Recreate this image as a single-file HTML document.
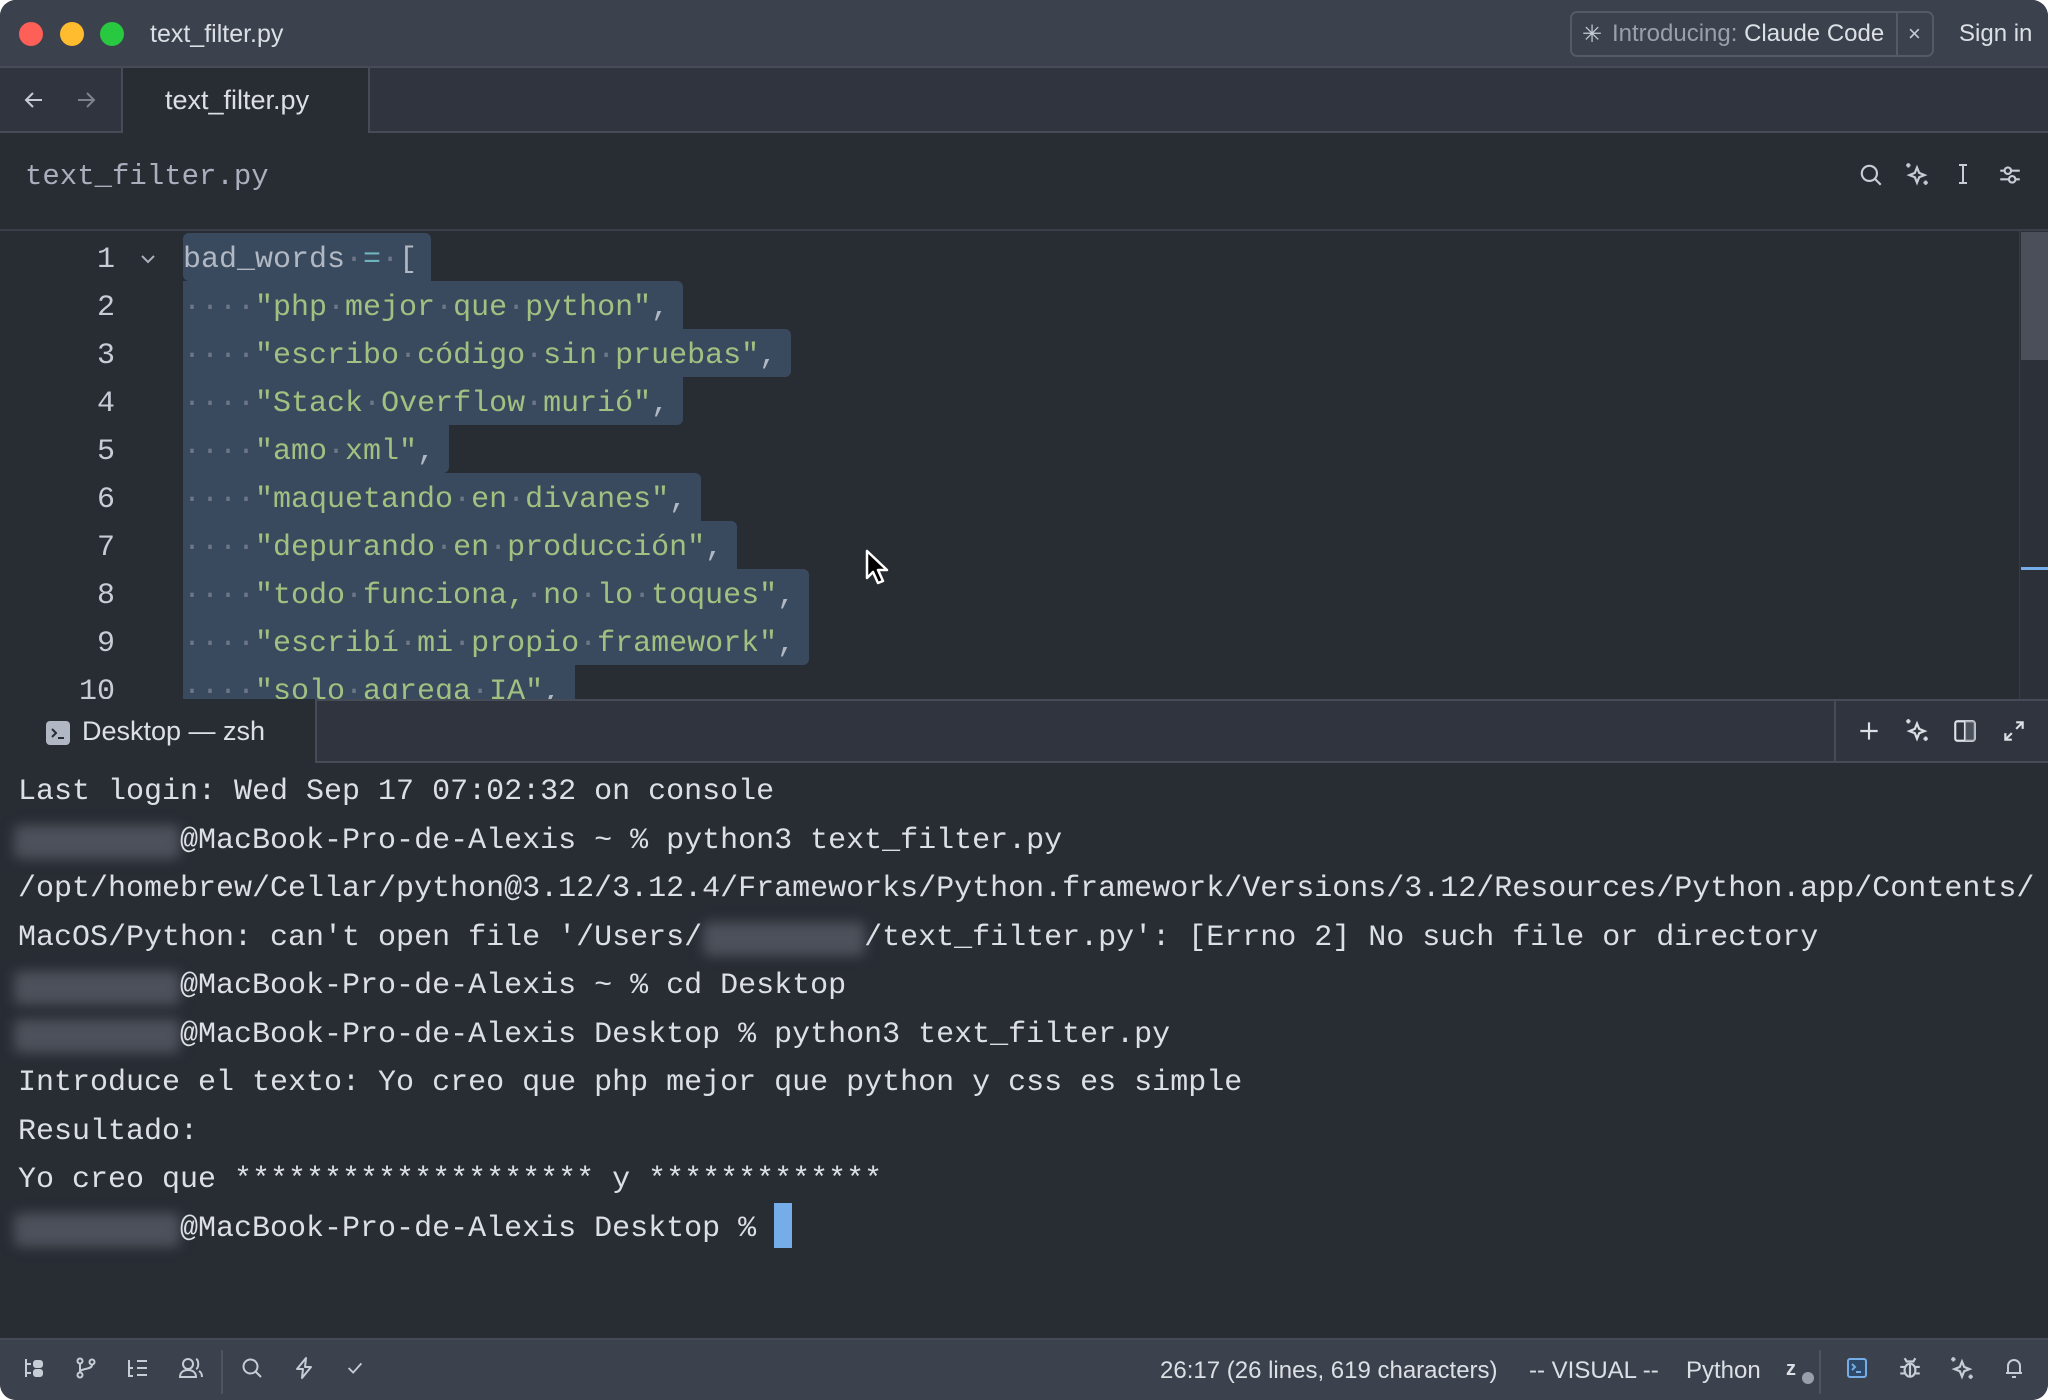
<!DOCTYPE html>
<html><head><meta charset="utf-8">
<style>
*{margin:0;padding:0;box-sizing:border-box}
html,body{width:2048px;height:1400px;background:#fff;overflow:hidden}
#win{position:absolute;left:0;top:0;width:2048px;height:1400px;border-radius:16px;overflow:hidden;background:#282c33;font-family:"Liberation Sans",sans-serif}
.abs{position:absolute}
.mono{font-family:"Liberation Mono",monospace;font-size:30px;white-space:pre}
#title{left:0;top:0;width:2048px;height:68px;background:#3b414d;border-bottom:2px solid #464b57}
.dot{position:absolute;width:24px;height:24px;border-radius:50%;top:22px}
#tabs{left:0;top:68px;width:2048px;height:65px;background:#2f343e;border-bottom:2px solid #464b57}
#hdr{left:0;top:133px;width:2048px;height:98px;background:#282c33;border-bottom:2px solid #3a3f4a}
.ln{position:absolute;width:115px;text-align:right;color:#c8ccd4}
.code{position:absolute;left:183px}
.sel{position:absolute;left:183px;background:#394a5e;height:48px}
.ws{color:#6e7686}
.s{color:#a1c181}
.t{color:#b2b8c3}
#tt{left:0;top:699px;width:2048px;height:64px;background:#2f343e;border-top:2px solid #464b57;border-bottom:2px solid #464b57}
.term{position:absolute;left:18px;color:#dce0e5}
.blur{position:absolute;left:14px;width:166px;height:34px;background:#4c515b;filter:blur(6px);border-radius:6px}
#status{left:0;top:1338px;width:2048px;height:62px;background:#3b414d;border-top:2px solid #464b57}
.ic{position:absolute}
</style></head><body>
<div id="win">
<div id="title" class="abs">
 <div class="dot" style="left:19px;background:#fe5f57"></div>
 <div class="dot" style="left:60px;background:#febc2e"></div>
 <div class="dot" style="left:100px;background:#28c840"></div>
 <div class="abs" style="left:150px;top:20px;font-size:25px;color:#dce0e5">text_filter.py</div>
 <div class="abs" style="left:1570px;top:11px;width:364px;height:46px;border:2px solid #545a66;border-radius:7px"></div>
 <div class="abs" style="left:1896px;top:12px;width:2px;height:44px;background:#545a66"></div>
 <div class="abs" style="left:1582px;top:20px;font-size:24px;color:#c8ccd4">✳</div>
 <div class="abs" style="left:1612px;top:20px;font-size:24px;color:#9aa0ab">Introducing: <span style="color:#dce0e5">Claude Code</span></div>
 <div class="abs" style="left:1908px;top:21px;font-size:22px;color:#c8ccd4">×</div>
 <div class="abs" style="left:1959px;top:20px;font-size:24px;color:#dce0e5">Sign in</div>
</div>
<div id="tabs" class="abs">
 <svg class="ic" style="left:22px;top:20px" width="24" height="24" viewBox="0 0 24 24" fill="none" stroke="#c8ccd4" stroke-width="2"><path d="M20 12H4M11 5l-7 7 7 7"/></svg>
 <svg class="ic" style="left:74px;top:20px" width="24" height="24" viewBox="0 0 24 24" fill="none" stroke="#7d828c" stroke-width="2"><path d="M4 12h16M13 5l7 7-7 7"/></svg>
 <div class="abs" style="left:121px;top:0;width:249px;height:67px;background:#282c33;border-left:2px solid #464b57;border-right:2px solid #464b57"></div>
 <div class="abs" style="left:165px;top:17px;font-size:27px;color:#dce0e5">text_filter.py</div>
</div>
<div id="hdr" class="abs">
 <div class="abs mono" style="left:25px;top:27px;color:#a9afbc;font-size:29px">text_filter.py</div>
 <svg class="ic" style="left:1858px;top:29px" width="26" height="26" viewBox="0 0 24 24" fill="none" stroke="#c8ccd4" stroke-width="2"><circle cx="10.5" cy="10.5" r="7"/><path d="M15.5 15.5L21 21"/></svg>
 <svg class="ic" style="left:1904px;top:28px" width="26" height="26" viewBox="0 0 24 24" fill="none" stroke="#c8ccd4" stroke-width="2"><path d="M12 6l2 5 5 2-5 2-2 5-2-5-5-2 5-2z"/><path d="M4 2v4M2 4h4M20 18v4M18 20h4"/></svg>
 <svg class="ic" style="left:1951px;top:29px" width="24" height="24" viewBox="0 0 24 24" fill="none" stroke="#c8ccd4" stroke-width="2"><path d="M8 3h8M8 21h8M12 3v18"/></svg>
 <svg class="ic" style="left:1997px;top:29px" width="26" height="26" viewBox="0 0 24 24" fill="none" stroke="#c8ccd4" stroke-width="2"><path d="M3 8h4M13 8h8M3 16h8M17 16h4"/><circle cx="10" cy="8" r="3"/><circle cx="14" cy="16" r="3"/></svg>
</div>
<!-- editor -->
<div class="abs" style="left:2019px;top:231px;width:29px;height:468px;background:#2c3038;border-left:1px solid #363b45"></div>
<div class="abs" style="left:2021px;top:232px;width:27px;height:128px;background:#4a4f59"></div>
<div class="abs" style="left:2021px;top:567px;width:27px;height:3px;background:#74ade8"></div>
<div class="sel" style="top:233px;width:248px;border-radius:6px 6px 0 6px"></div>
<div class="sel" style="top:281px;width:500px;border-radius:0 6px 0 0"></div>
<div class="sel" style="top:329px;width:608px;border-radius:0 6px 6px 0"></div>
<div class="sel" style="top:377px;width:500px;border-radius:0 0 6px 0"></div>
<div class="sel" style="top:425px;width:266px;border-radius:0 0 6px 0"></div>
<div class="sel" style="top:473px;width:518px;border-radius:0 6px 0 0"></div>
<div class="sel" style="top:521px;width:554px;border-radius:0 6px 0 0"></div>
<div class="sel" style="top:569px;width:626px;border-radius:0 6px 0 0"></div>
<div class="sel" style="top:617px;width:626px;border-radius:0 0 6px 0"></div>
<div class="sel" style="top:665px;width:392px;height:34px"></div>
<div class="abs" style="left:0;top:231px;width:2019px;height:468px;overflow:hidden">
<div class="mono" style="position:absolute;left:0;top:3px;line-height:48px">
<div class="ln" style="top:2px">1</div><div class="ln" style="top:50px">2</div><div class="ln" style="top:98px">3</div><div class="ln" style="top:146px">4</div><div class="ln" style="top:194px">5</div><div class="ln" style="top:242px">6</div><div class="ln" style="top:290px">7</div><div class="ln" style="top:338px">8</div><div class="ln" style="top:386px">9</div><div class="ln" style="top:434px">10</div>
<div class="code" style="top:2px"><span class="t">bad_words</span><span class="ws">·</span><span style="color:#6eb4bf">=</span><span class="ws">·</span><span class="t">[</span></div>
<div class="code" style="top:50px"><span class="ws">····</span><span class="s">"php<span class="ws">·</span>mejor<span class="ws">·</span>que<span class="ws">·</span>python"</span><span class="t">,</span></div>
<div class="code" style="top:98px"><span class="ws">····</span><span class="s">"escribo<span class="ws">·</span>código<span class="ws">·</span>sin<span class="ws">·</span>pruebas"</span><span class="t">,</span></div>
<div class="code" style="top:146px"><span class="ws">····</span><span class="s">"Stack<span class="ws">·</span>Overflow<span class="ws">·</span>murió"</span><span class="t">,</span></div>
<div class="code" style="top:194px"><span class="ws">····</span><span class="s">"amo<span class="ws">·</span>xml"</span><span class="t">,</span></div>
<div class="code" style="top:242px"><span class="ws">····</span><span class="s">"maquetando<span class="ws">·</span>en<span class="ws">·</span>divanes"</span><span class="t">,</span></div>
<div class="code" style="top:290px"><span class="ws">····</span><span class="s">"depurando<span class="ws">·</span>en<span class="ws">·</span>producción"</span><span class="t">,</span></div>
<div class="code" style="top:338px"><span class="ws">····</span><span class="s">"todo<span class="ws">·</span>funciona,<span class="ws">·</span>no<span class="ws">·</span>lo<span class="ws">·</span>toques"</span><span class="t">,</span></div>
<div class="code" style="top:386px"><span class="ws">····</span><span class="s">"escribí<span class="ws">·</span>mi<span class="ws">·</span>propio<span class="ws">·</span>framework"</span><span class="t">,</span></div>
<div class="code" style="top:434px"><span class="ws">····</span><span class="s">"solo<span class="ws">·</span>agrega<span class="ws">·</span>IA"</span><span class="t">,</span></div>
</div>
<svg class="ic" style="left:138px;top:18px" width="20" height="20" viewBox="0 0 20 20" fill="none" stroke="#a9afbc" stroke-width="2"><path d="M4 7l6 6 6-6"/></svg>
</div>
<svg class="ic" style="left:864px;top:549px" width="28" height="38" viewBox="0 0 28 38"><path d="M3 2v27l6-6 5 11 5-2-5-11h9z" fill="#000" stroke="#fff" stroke-width="2.5" stroke-linejoin="round"/></svg>
<!-- terminal tab bar -->
<div id="tt" class="abs">
 <div class="abs" style="left:0;top:-2px;width:317px;height:64px;background:#282c33;border-right:2px solid #464b57"></div>
 <div class="abs" style="left:46px;top:20px;width:24px;height:24px;background:#b2b8c3;border-radius:4px"></div>
 <svg class="ic" style="left:46px;top:20px" width="24" height="24" viewBox="0 0 24 24" fill="none" stroke="#282c33" stroke-width="2"><path d="M6 8l4 4-4 4M12 17h6"/></svg>
 <div class="abs" style="left:82px;top:15px;font-size:27px;color:#dce0e5">Desktop — zsh</div>
 <div class="abs" style="left:1834px;top:0;width:2px;height:62px;background:#464b57"></div>
 <svg class="ic" style="left:1856px;top:17px" width="26" height="26" viewBox="0 0 24 24" fill="none" stroke="#dce0e5" stroke-width="2"><path d="M12 4v16M4 12h16"/></svg>
 <svg class="ic" style="left:1904px;top:16px" width="26" height="26" viewBox="0 0 24 24" fill="none" stroke="#dce0e5" stroke-width="2"><path d="M12 6l2 5 5 2-5 2-2 5-2-5-5-2 5-2z"/><path d="M4 2v4M2 4h4M20 18v4M18 20h4"/></svg>
 <svg class="ic" style="left:1952px;top:17px" width="26" height="26" viewBox="0 0 24 24" fill="none" stroke="#dce0e5" stroke-width="2"><rect x="3" y="3" width="18" height="18" rx="2"/><path d="M12 3v18"/><rect x="12" y="3" width="9" height="18" fill="#6a6f78" stroke="none" opacity=".5"/></svg>
 <svg class="ic" style="left:2001px;top:17px" width="26" height="26" viewBox="0 0 24 24" fill="none" stroke="#dce0e5" stroke-width="2"><path d="M14 4h6v6M20 4l-6 6M10 20H4v-6M4 20l6-6"/></svg>
</div>
<!-- terminal -->
<div class="mono" style="position:absolute;left:0;top:768px;line-height:48.5px;color:#dce0e5">
<div class="blur" style="top:57px"></div><div class="blur" style="left:703px;width:162px;top:154px"></div><div class="blur" style="top:203px"></div><div class="blur" style="top:251px"></div><div class="blur" style="top:445px"></div>
<div class="term" style="top:0">Last login: Wed Sep 17 07:02:32 on console</div>
<div class="term" style="top:48.5px">         @MacBook-Pro-de-Alexis ~ % python3 text_filter.py</div>
<div class="term" style="top:97px">/opt/homebrew/Cellar/python@3.12/3.12.4/Frameworks/Python.framework/Versions/3.12/Resources/Python.app/Contents/</div>
<div class="term" style="top:145.5px">MacOS/Python: can't open file '/Users/         /text_filter.py': [Errno 2] No such file or directory</div>
<div class="term" style="top:194px">         @MacBook-Pro-de-Alexis ~ % cd Desktop</div>
<div class="term" style="top:242.5px">         @MacBook-Pro-de-Alexis Desktop % python3 text_filter.py</div>
<div class="term" style="top:291px">Introduce el texto: Yo creo que php mejor que python y css es simple</div>
<div class="term" style="top:339.5px">Resultado:</div>
<div class="term" style="top:388px">Yo creo que ******************** y *************</div>
<div class="term" style="top:436.5px">         @MacBook-Pro-de-Alexis Desktop % </div>
</div>
<div class="abs" style="left:774px;top:1203px;width:18px;height:45px;background:#74ade8"></div>
<!-- status -->
<div id="status" class="abs">
 <svg class="ic" style="left:22px;top:16px" width="24" height="24" viewBox="0 0 24 24" fill="none" stroke="#c8ccd4" stroke-width="2"><path d="M4 3v18M4 8h5M4 17h5"/><rect x="12" y="5" width="8" height="6" rx="2" fill="#c8ccd4"/><rect x="12" y="14" width="8" height="6" rx="2" fill="#c8ccd4"/></svg>
 <svg class="ic" style="left:74px;top:16px" width="24" height="24" viewBox="0 0 24 24" fill="none" stroke="#c8ccd4" stroke-width="2"><circle cx="6" cy="5" r="2.5"/><circle cx="6" cy="19" r="2.5"/><circle cx="18" cy="6" r="2.5"/><path d="M6 8v8M18 9c0 5-12 3-12 7"/></svg>
 <svg class="ic" style="left:126px;top:16px" width="24" height="24" viewBox="0 0 24 24" fill="none" stroke="#c8ccd4" stroke-width="2"><path d="M3 4v16h4M3 12h4M11 5h10M11 12h10M11 19h10"/></svg>
 <svg class="ic" style="left:178px;top:16px" width="26" height="24" viewBox="0 0 26 24" fill="none" stroke="#c8ccd4" stroke-width="2"><circle cx="10" cy="8" r="5"/><path d="M2 21c0-5 4-7 8-7s8 2 8 7zM18 3c3 1 3 9 0 10M21 15c2 1 3 3 3 6"/></svg>
 <div class="abs" style="left:221px;top:10px;width:2px;height:44px;background:#4e5460"></div>
 <svg class="ic" style="left:240px;top:16px" width="24" height="24" viewBox="0 0 24 24" fill="none" stroke="#c8ccd4" stroke-width="2"><circle cx="10.5" cy="10.5" r="7"/><path d="M15.5 15.5L21 21"/></svg>
 <svg class="ic" style="left:292px;top:16px" width="24" height="24" viewBox="0 0 24 24" fill="none" stroke="#c8ccd4" stroke-width="2" stroke-linejoin="round"><path d="M14 2L5 13h6l-1 9 9-11h-6z"/></svg>
 <svg class="ic" style="left:344px;top:17px" width="22" height="22" viewBox="0 0 24 24" fill="none" stroke="#c8ccd4" stroke-width="2"><path d="M5 12l5 5 9-10"/></svg>
 <div class="abs" style="left:1160px;top:17px;font-size:24px;color:#dce0e5;white-space:pre">26:17 (26 lines, 619 characters)</div>
 <div class="abs" style="left:1529px;top:17px;font-size:24px;color:#dce0e5">-- VISUAL --</div>
 <div class="abs" style="left:1686px;top:17px;font-size:24px;color:#dce0e5">Python</div>
 <div class="abs" style="left:1786px;top:18px;font-size:20px;font-weight:bold;color:#dce0e5">z</div>
 <div class="abs" style="left:1802px;top:32px;width:12px;height:12px;border-radius:50%;background:#9aa0ab"></div>
 <div class="abs" style="left:1819px;top:10px;width:2px;height:44px;background:#4e5460"></div>
 <svg class="ic" style="left:1845px;top:16px" width="24" height="24" viewBox="0 0 24 24" fill="none" stroke="#74ade8" stroke-width="2"><rect x="3" y="3" width="18" height="18" rx="2" fill="#2e4a68"/><path d="M7 8l3 3-3 3M11 16h5"/></svg>
 <svg class="ic" style="left:1897px;top:15px" width="26" height="26" viewBox="0 0 24 24" fill="none" stroke="#c8ccd4" stroke-width="2"><ellipse cx="12" cy="14" rx="5" ry="6"/><path d="M9 6l-2-3M15 6l2-3M8 6h8M3 11h4M17 11h4M3 17h4M17 17h4M12 8v12"/></svg>
 <svg class="ic" style="left:1949px;top:15px" width="26" height="26" viewBox="0 0 24 24" fill="none" stroke="#c8ccd4" stroke-width="2"><path d="M12 6l2 5 5 2-5 2-2 5-2-5-5-2 5-2z"/><path d="M4 2v4M2 4h4M20 18v4M18 20h4"/></svg>
 <svg class="ic" style="left:2002px;top:16px" width="24" height="24" viewBox="0 0 24 24" fill="none" stroke="#c8ccd4" stroke-width="2"><path d="M6 17V10a6 6 0 0 1 12 0v7zM4 17h16M10 21h4"/></svg>
</div>
</div>
</body></html>
